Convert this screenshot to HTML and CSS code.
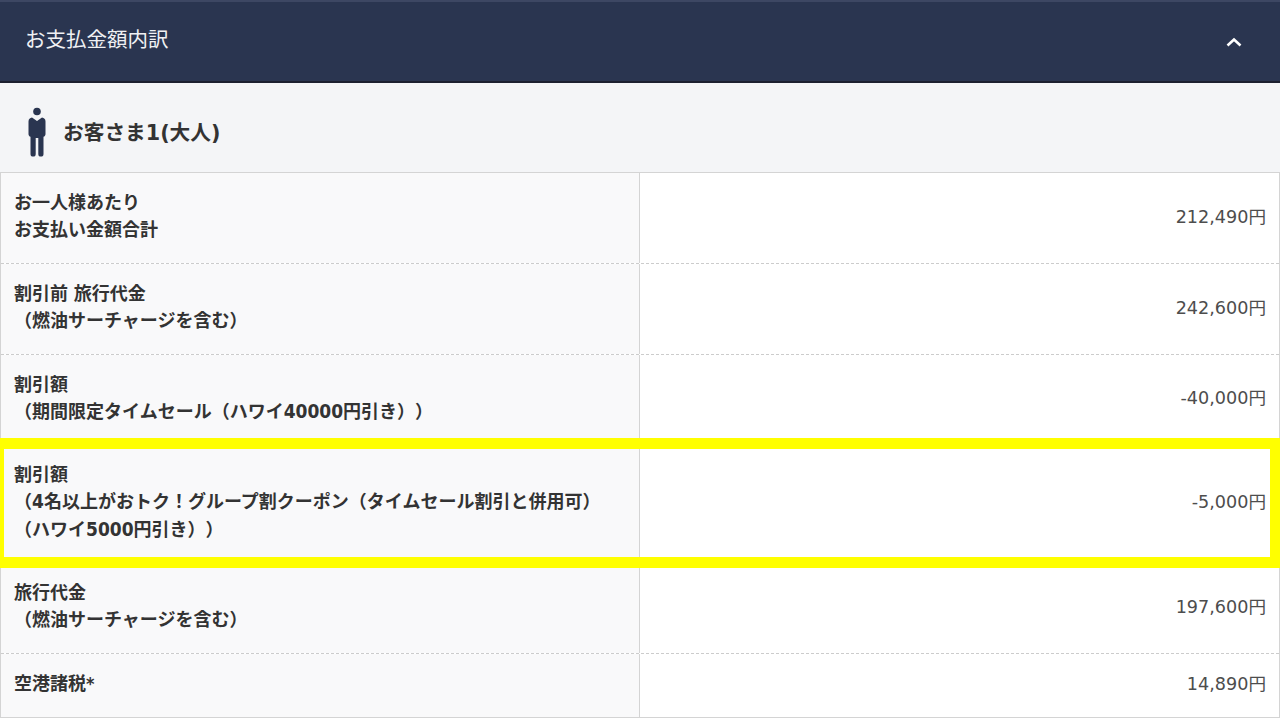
FILE: index.html
```html
<!DOCTYPE html>
<html lang="ja">
<head>
<meta charset="utf-8">
<title>お支払金額内訳</title>
<link rel="stylesheet" href="styles.css">
</head>
<body>
<header class="head">
  <span class="head-title">お支払金額内訳</span>
  <svg class="chev" width="16" height="10" viewBox="0 0 16 10"><path d="M1.500 8.500 8 2.500l6.500 6" fill="none" stroke="#fff" stroke-width="2.600"/></svg>
</header>
<div class="pax">
  <svg class="pax-icon" width="18" height="50" viewBox="0 0 18 50"><circle cx="9" cy="4.500" r="3.800" fill="#2a3550"/><path d="M4 10.500 9 14l5-3.500c2 .3 3.500 1.500 3.500 4V27c0 1.500-.8 2.500-2 2.800V47a2.500 2.500 0 0 1-5.200 0V31H7.700v16a2.500 2.500 0 0 1-5.200 0V29.800C1.300 29.500.5 28.500.5 27V14.500c0-2.500 1.500-3.700 3.500-4z" fill="#2a3550"/></svg>
  <span class="pax-name">お客さま1(大人)</span>
</div>
<div class="table">
  <div class="row">
    <div class="label">お一人様あたり<br>お支払い金額合計</div>
    <div class="value">212,490円</div>
  </div>
  <div class="row">
    <div class="label">割引前 旅行代金<br>（燃油サーチャージを含む）</div>
    <div class="value">242,600円</div>
  </div>
  <div class="row row-s">
    <div class="label">割引額<br>（期間限定タイムセール（ハワイ<span class="num">40000</span>円引き））</div>
    <div class="value">-40,000円</div>
  </div>
  <div class="row row-hl">
    <div class="label">割引額<br>（<span class="num">4</span>名以上がおトク！グループ割クーポン（タイムセール割引と併用可）<br>（ハワイ<span class="num">5000</span>円引き））</div>
    <div class="value">-5,000円</div>
    <div class="highlight"></div>
  </div>
  <div class="row">
    <div class="label">旅行代金<br>（燃油サーチャージを含む）</div>
    <div class="value">197,600円</div>
  </div>
  <div class="row row-last">
    <div class="label">空港諸税*</div>
    <div class="value">14,890円</div>
  </div>
</div>
</body>
</html>
```
FILE: styles.css
```css
* { box-sizing: border-box; }
html, body { margin: 0; padding: 0; }
body {
  width: 1280px;
  height: 718px;
  overflow: hidden;
  background: #f4f5f7;
  color: #333;
  font-family: "DejaVu Sans", "Noto Sans CJK JP", sans-serif;
  text-spacing-trim: space-all;
}
.head {
  height: 83px;
  background: #2a3550;
  border-top: 2px solid #3d4763;
  border-bottom: 2px solid #1c2030;
  display: flex;
  align-items: center;
  justify-content: space-between;
  padding: 0 38px 4px 25px;
  color: #f0f1f4;
  font-size: 20.500px;
}
.head-title { font-family: "Noto Sans CJK JP", sans-serif; line-height: 28px; margin-top: -4px; }
.chev { margin-top: 5px; }
.pax {
  height: 89px;
  display: flex;
  align-items: center;
  gap: 17px;
  padding: 10px 0 0 28px;
}
.pax-icon { margin-top: -1px; }
.pax-name { font-size: 20.700px; font-weight: 700; color: #333; margin-top: -4px; }
.table {
  border: 1px solid #d4d4d4;
  border-bottom-width: 2px;
  background: #fff;
}
.row {
  position: relative;
  display: grid;
  grid-template-columns: 639px 1fr;
  height: 91px;
  border-bottom: 1px dashed #ccc;
}
.row-s { height: 90px; }
.row-hl { height: 118px; }
.row-last { height: 63px; border-bottom: 0; }
.label {
  background: #f9f9fa;
  border-right: 1px solid #d4d4d4;
  padding: 15.700px 13px 0;
  font-family: "DejaVu Sans Condensed", "DejaVu Sans", "Noto Sans CJK JP", sans-serif;
  font-stretch: condensed;
  font-size: 18px;
  line-height: 27.600px;
  font-weight: 700;
  color: #333;
}
.num { font-size: 19px; line-height: 1; }
.value {
  display: flex;
  align-items: center;
  justify-content: flex-end;
  padding: 0 13px 3px 0;
  font-size: 17.600px;
  line-height: 28px;
  color: #4d4d4d;
}
.highlight {
  position: absolute;
  z-index: 1;
  left: -1px;
  right: -1px;
  top: -7px;
  bottom: -6px;
  border: 11px solid #ff0;
  border-left-width: 4px;
  border-right-width: 10px;
  pointer-events: none;
}
```
